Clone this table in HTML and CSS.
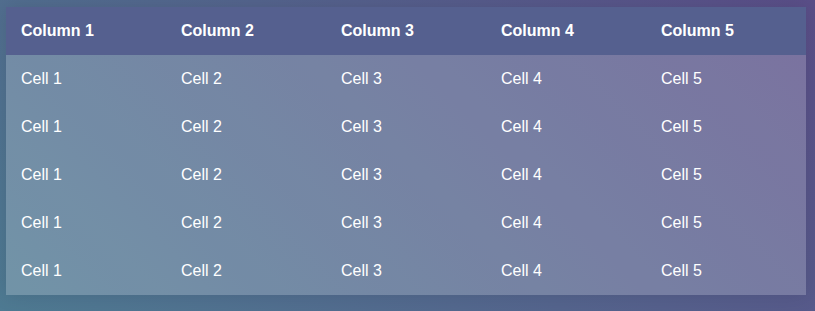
FILE: index.html
```html
<!DOCTYPE html>
<html>
<head>
<meta charset="utf-8">
<link rel="stylesheet" href="styles.css">
</head>
<body>
<div class="wrap">
<table class="grid">
<thead>
<tr><th>Column 1</th><th>Column 2</th><th>Column 3</th><th>Column 4</th><th>Column 5</th></tr>
</thead>
<tbody>
<tr><td>Cell 1</td><td>Cell 2</td><td>Cell 3</td><td>Cell 4</td><td>Cell 5</td></tr>
<tr><td>Cell 1</td><td>Cell 2</td><td>Cell 3</td><td>Cell 4</td><td>Cell 5</td></tr>
<tr><td>Cell 1</td><td>Cell 2</td><td>Cell 3</td><td>Cell 4</td><td>Cell 5</td></tr>
<tr><td>Cell 1</td><td>Cell 2</td><td>Cell 3</td><td>Cell 4</td><td>Cell 5</td></tr>
<tr><td>Cell 1</td><td>Cell 2</td><td>Cell 3</td><td>Cell 4</td><td>Cell 5</td></tr>
</tbody>
</table>
</div>
</body>
</html>
```
FILE: styles.css
```css
html, body {
  margin: 0;
  height: 100%;
}
body {
  background: linear-gradient(45deg, rgb(78, 122, 146), rgb(90, 78, 136));
  font-family: "Liberation Sans", Arial, sans-serif;
  font-size: 16px;
}
.wrap {
  padding: 7px 6px;
}
.grid {
  width: 800px;
  border-collapse: collapse;
  box-shadow: 0 0 20px rgba(0, 0, 0, 0.1);
}
.grid th,
.grid td {
  padding: 15px;
  line-height: 18px;
  background-color: rgba(255, 255, 255, 0.2);
  color: #fff;
  text-align: left;
  font-weight: normal;
}
.grid th {
  background-color: #55608f;
  font-weight: bold;
}
```
